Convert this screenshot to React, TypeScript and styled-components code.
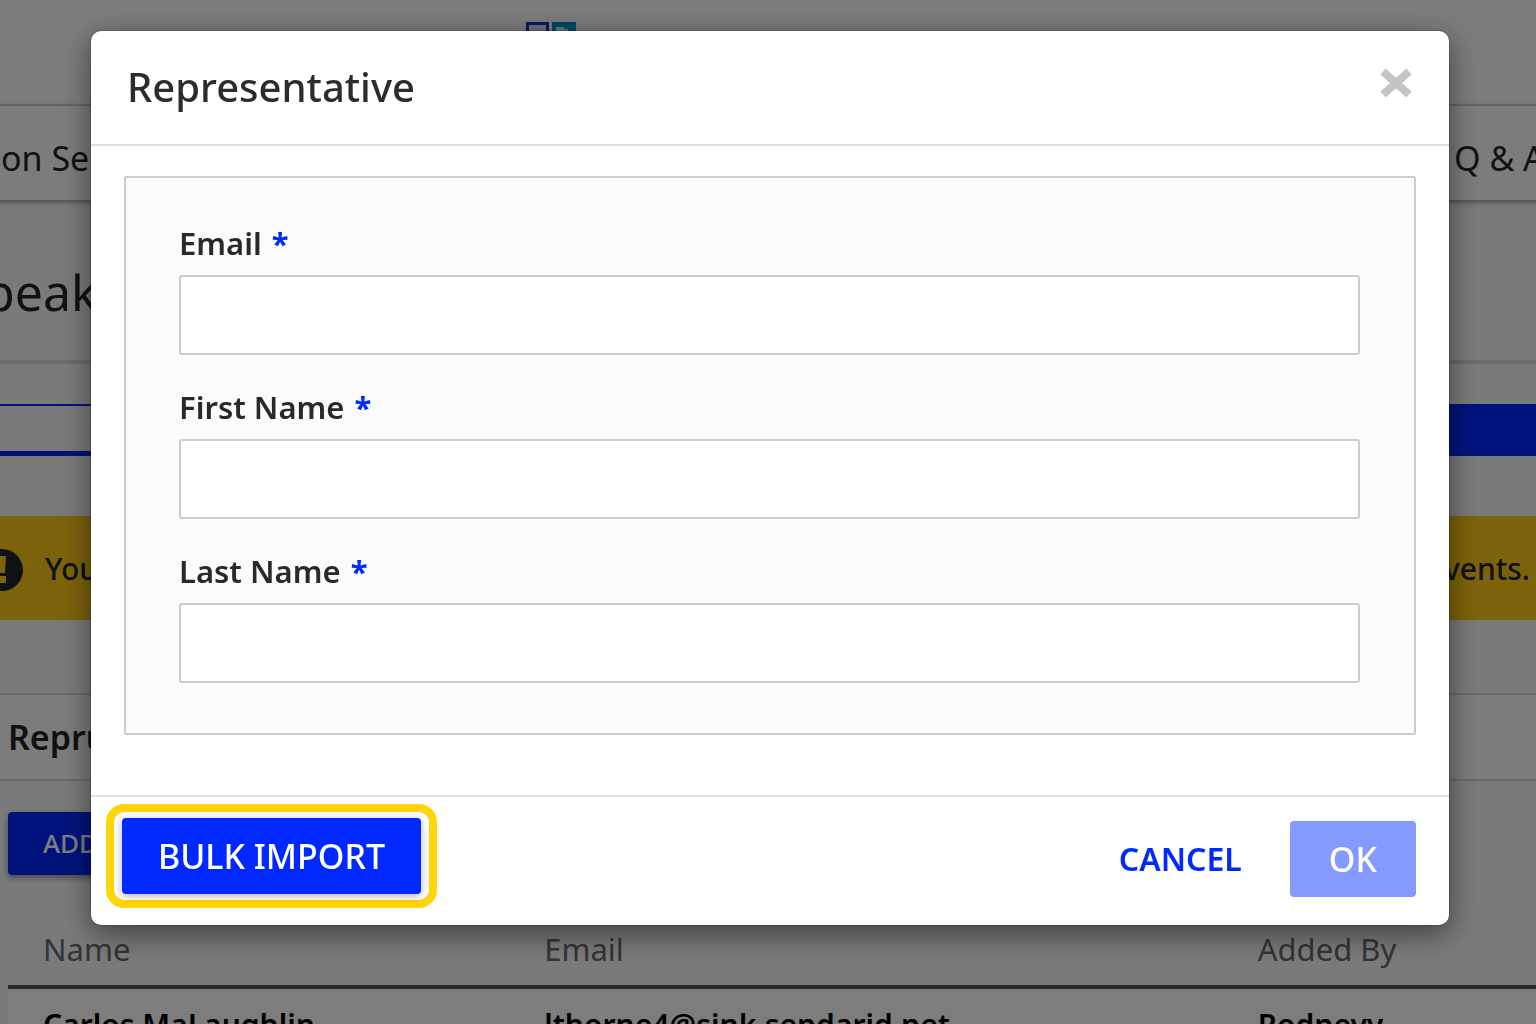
import React from "react";
import styled, { createGlobalStyle } from "styled-components";

const Global = createGlobalStyle`
  * { box-sizing: border-box; }
  body {
    margin: 0;
    color: #212327;
    font-family: "Noto Sans", "Open Sans", sans-serif;
    font-size: 30px;
    line-height: 40px;
  }
`;

const Page = styled.div`
  height: 100vh;
  overflow: hidden;
  background: #f8f9fb;
`;

const Masthead = styled.header`
  height: 106px;
  padding: 22px 0 0 526px;
  background: #fcfcfc;
  border-bottom: 2px solid #dcdcdc;
`;

const Logo = styled.svg`
  display: block;
`;

const Nav = styled.nav`
  display: flex;
  justify-content: space-between;
  align-items: center;
  height: 94px;
  margin: 0 -12px;
  padding: 10px 12px 0;
  background: #fcfcfc;
  box-shadow: 0 2px 6px rgba(0, 0, 0, 0.4);
`;

const NavLink = styled.a<{ $end?: boolean }>`
  flex: none;
  width: ${(p) => (p.$end ? "82px" : "auto")};
  padding-left: ${(p) => (p.$end ? "0" : "1px")};
  font-size: 34px;
  color: inherit;
  text-decoration: none;
  white-space: nowrap;
`;

const TitleBar = styled.div`
  height: 164px;
  padding-top: 60px;
  border-bottom: 4px solid #dddcd8;
`;

const PageTitle = styled.h1`
  margin: 0 0 0 -16px;
  font-size: 50px;
  line-height: 64px;
  font-weight: 400;
`;

const Tabs = styled.div`
  display: flex;
  height: 52px;
  margin-top: 40px;
`;

const Tab = styled.button<{ $active?: boolean }>`
  flex: 1;
  border: solid #0028ff;
  border-width: 2px 0 5px;
  background: ${(p) => (p.$active ? "#0028ff" : "transparent")};
`;

const Alert = styled.div`
  display: flex;
  align-items: center;
  height: 104px;
  margin: 60px 0 73px;
  padding: 2px 6px 0 0;
  background: #fcca18;
`;

const AlertIcon = styled.svg`
  flex: none;
  width: 42px;
  height: 42px;
  margin: 2px 22px 0 -19px;
`;

const AlertText = styled.span`
  font-weight: 500;
  &:last-child { margin-left: auto; }
`;

const PanelTitle = styled.h2`
  height: 88px;
  margin: 0;
  padding: 22px 8px;
  border: solid #d8d8d8;
  border-width: 2px 0;
  background: #fcfcfc;
  font-size: 34px;
  font-weight: 600;
`;

const AddButton = styled.button`
  display: block;
  height: 63px;
  margin: 31px 8px 37px;
  padding: 0 35px 2px;
  border: 0;
  border-radius: 4px;
  background: #0028ff;
  box-shadow: 0 3px 6px rgba(0, 0, 0, 0.4);
  color: #fff;
  font: 500 26px/40px "Noto Sans", sans-serif;
`;

const Table = styled.table`
  width: calc(100% - 8px);
  margin-left: 8px;
  border-collapse: collapse;
  table-layout: fixed;
  text-align: left;
  background: #fff;
`;

const Th = styled.th<{ $share: string }>`
  width: ${(p) => p.$share};
  height: 75px;
  padding: 0 35px;
  border-bottom: 4px solid #555;
  background: #f8f8f8;
  color: #666a6c;
  font-size: 31px;
  font-weight: 400;
`;

const Td = styled.td`
  padding: 16px 35px;
  color: #000;
  font-weight: 600;
`;

const Overlay = styled.div`
  position: fixed;
  inset: 0;
  padding: 31px 87px 99px 91px;
  background: rgba(0, 0, 0, 0.51);
`;

const Modal = styled.section`
  border-radius: 10px;
  background: #fff;
  box-shadow: 0 8px 30px rgba(0, 0, 0, 0.5), 0 0 2px rgba(0, 0, 0, 0.5);
`;

const ModalHeader = styled.header`
  display: flex;
  justify-content: space-between;
  align-items: flex-start;
  height: 115px;
  padding: 32px 36px;
  border-bottom: 2px solid #dfe0e0;
`;

const ModalTitle = styled.h2`
  margin: 0;
  color: #2c2c2e;
  font-size: 40px;
  line-height: 48px;
  font-weight: 500;
`;

const CloseButton = styled.button`
  display: flex;
  padding: 4px 0;
  border: 0;
  background: none;
`;

const ModalBody = styled.div`
  padding: 30px 33px 60px;
`;

const Fields = styled.div`
  display: grid;
  gap: 32px;
  padding: 45px 54px 50px 53px;
  border: 2px solid #cbcccd;
  border-radius: 2px;
  background: #fafbfc;
`;

const Field = styled.div`
  display: grid;
  gap: 12px;
`;

const Label = styled.label`
  color: #29292b;
  font-size: 31px;
  font-weight: 600;
`;

const Required = styled.span`
  margin-left: 2px;
  color: #0028ff;
  font-weight: 700;
`;

const Input = styled.input`
  width: 100%;
  height: 80px;
  padding: 0 20px;
  border: 2px solid #cbcccd;
  border-radius: 3px;
  background: #fff;
  font: inherit;
`;

const ModalFooter = styled.footer`
  display: flex;
  align-items: center;
  height: 130px;
  padding: 0 33px 10px 15px;
  border-top: 2px solid #dfe0e0;
`;

const Highlight = styled.div`
  padding: 6px 8px;
  border: 8px solid #ffd40a;
  border-radius: 18px;
`;

const Button = styled.button<{ $kind: "primary" | "text" | "disabled" }>`
  height: 76px;
  padding: ${(p) => ({ primary: "0 36px", text: "0 34px", disabled: "0 39px" })[p.$kind]};
  border: 0;
  border-radius: 4px;
  background: ${(p) => ({ primary: "#0028ff", text: "none", disabled: "#859aff" })[p.$kind]};
  box-shadow: ${(p) => (p.$kind === "primary" ? "0 2px 8px rgba(0, 0, 0, 0.3)" : "none")};
  color: ${(p) => (p.$kind === "text" ? "#0028ff" : "#fff")};
  font-family: "Noto Sans", sans-serif;
  font-size: ${(p) => (p.$kind === "text" ? "32px" : "34px")};
  font-weight: ${(p) => (p.$kind === "text" ? 600 : 500)};
  line-height: 40px;
`;

const Actions = styled.div`
  display: flex;
  gap: 14px;
  margin-left: auto;
  padding-top: 5px;
`;

const fields = [
  { id: "email", label: "Email", type: "email" },
  { id: "first-name", label: "First Name", type: "text" },
  { id: "last-name", label: "Last Name", type: "text" },
];

export default function App() {
  return (
    <>
      <Global />
      <Page>
        <Masthead>
          <Logo width="50" height="24" viewBox="0 0 50 24" aria-hidden="true">
            <path d="M1.5 24V1.5h20V24" fill="#e4e0f6" stroke="#0a38c4" strokeWidth="3" />
            <path d="M26 0h24v24H26z" fill="#0096c8" />
            <path d="M30 24V5h8v2h4v17z" fill="#d8eef8" />
          </Logo>
        </Masthead>
        <Nav>
          <NavLink href="#sessions">on Se</NavLink>
          <NavLink href="#qa" $end>Q &amp; A</NavLink>
        </Nav>
        <TitleBar>
          <PageTitle>peak</PageTitle>
        </TitleBar>
        <Tabs>
          <Tab aria-label="First view" />
          <Tab aria-label="Second view" $active />
        </Tabs>
        <Alert>
          <AlertIcon viewBox="0 0 42 42" aria-hidden="true">
            <circle cx="21" cy="21" r="21" fill="#20252a" />
            <path d="M17 7h8l-1 17h-6zM17 27h8v7h-8z" fill="#fcca18" />
          </AlertIcon>
          <AlertText>You</AlertText>
          <AlertText>vents.</AlertText>
        </Alert>
        <PanelTitle>Repru</PanelTitle>
        <AddButton>ADD</AddButton>
        <Table>
          <thead>
            <tr>
              <Th $share="32.8%">Name</Th>
              <Th $share="46.7%">Email</Th>
              <Th $share="20.5%">Added By</Th>
            </tr>
          </thead>
          <tbody>
            <tr>
              <Td>Carlos MaLaughlin</Td>
              <Td>lthorne4@sink.sendarid.net</Td>
              <Td>Rodneyy</Td>
            </tr>
          </tbody>
        </Table>
      </Page>
      <Overlay>
        <Modal role="dialog" aria-modal="true" aria-labelledby="dialog-title">
          <ModalHeader>
            <ModalTitle id="dialog-title">Representative</ModalTitle>
            <CloseButton aria-label="Close">
              <svg width="34" height="32" viewBox="0 0 34 32" aria-hidden="true">
                <path d="M4 4.5 30 27.5M30 4.5 4 27.5" fill="none" stroke="#c4c4c4" strokeWidth="8" />
              </svg>
            </CloseButton>
          </ModalHeader>
          <ModalBody>
            <Fields>
              {fields.map((f) => (
                <Field key={f.id}>
                  <Label htmlFor={f.id}>
                    {f.label} <Required>*</Required>
                  </Label>
                  <Input id={f.id} type={f.type} required />
                </Field>
              ))}
            </Fields>
          </ModalBody>
          <ModalFooter>
            <Highlight>
              <Button $kind="primary">BULK IMPORT</Button>
            </Highlight>
            <Actions>
              <Button $kind="text">CANCEL</Button>
              <Button $kind="disabled" disabled>OK</Button>
            </Actions>
          </ModalFooter>
        </Modal>
      </Overlay>
    </>
  );
}
